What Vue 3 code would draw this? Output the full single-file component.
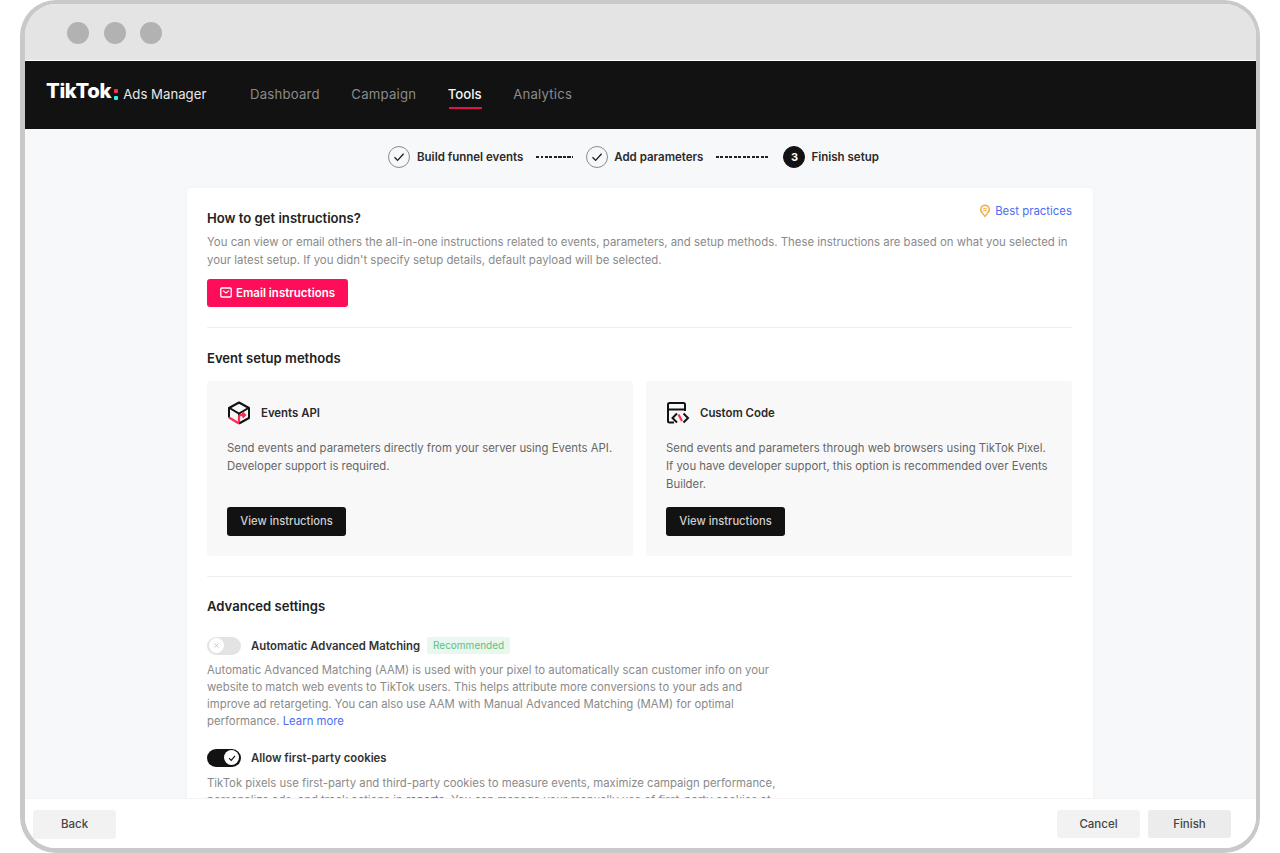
<template>
  <div class="frame">
    <div class="chrome">
      <span class="dot"></span>
      <span class="dot"></span>
      <span class="dot"></span>
    </div>

    <header class="nav">
      <div class="logo">
        <span class="logo-word">TikTok</span>
        <span class="logo-dots"><i class="red"></i><i class="cyan"></i></span>
        <span class="logo-sub">Ads Manager</span>
      </div>
      <nav class="links">
        <a v-for="link in links" :key="link" :class="{ active: link === 'Tools' }">{{ link }}</a>
      </nav>
    </header>

    <main class="body">
      <div class="stepper">
        <span class="step-circle">
          <svg width="12" height="12" viewBox="0 0 12 12"><path d="M1.5 6.3 4.6 9.4 10.6 2.8" fill="none" stroke="#1a1a1a" stroke-width="1.3" /></svg>
        </span>
        <span class="step-label first">Build funnel events</span>
        <span class="dashes short"></span>
        <span class="step-circle">
          <svg width="12" height="12" viewBox="0 0 12 12"><path d="M1.5 6.3 4.6 9.4 10.6 2.8" fill="none" stroke="#1a1a1a" stroke-width="1.3" /></svg>
        </span>
        <span class="step-label">Add parameters</span>
        <span class="dashes long"></span>
        <span class="step-circle current">3</span>
        <span class="step-label">Finish setup</span>
      </div>

      <section class="card">
        <div class="title-row">
          <h2>How to get instructions?</h2>
          <a class="practices">
            <svg width="12" height="14" viewBox="0 0 12 14">
              <path d="M6 1.2a4.3 4.3 0 0 1 2.6 7.7L6 12.6 3.4 8.9A4.3 4.3 0 0 1 6 1.2Z" fill="none" stroke="#f2ae4b" stroke-width="1.4" />
              <path d="M4.2 4.6h3.6M4.2 6.6h3.6" stroke="#f2ae4b" stroke-width="1" />
            </svg>
            Best practices
          </a>
        </div>
        <p class="desc intro">
          You can view or email others the all-in-one instructions related to events, parameters, and setup methods. These instructions are based on what you selected in your latest setup. If you didn't specify setup details, default payload will be selected.
        </p>
        <button class="btn-email">
          <svg width="12" height="11" viewBox="0 0 12 11">
            <rect x="0.8" y="1" width="10.4" height="9" rx="1" fill="none" stroke="#fff" stroke-width="1.3" />
            <path d="M3 3.6 6 6l3-2.4" fill="none" stroke="#fff" stroke-width="1.2" />
          </svg>
          Email instructions
        </button>

        <hr />

        <h2>Event setup methods</h2>
        <div class="methods">
          <div class="method">
            <div class="method-head">
              <svg width="24" height="24" viewBox="0 0 24 24" fill="none">
                <path d="M2 16.500V7L12 1.500 22 7v10L12 22.500" stroke="#121212" stroke-width="2" stroke-linejoin="round" />
                <path d="M2.500 7 12 12.500 21.500 7M12 12.500V15" stroke="#121212" stroke-width="2" />
                <path d="M2 16.500 12 22.500M12 21v-5.500q0-1.500 2-1.500h4M15.500 11.500l2.500 2.500-2.500 2.500" stroke="#fe2c55" stroke-width="2.200" />
              </svg>
              <h3>Events API</h3>
            </div>
            <p class="desc dark">Send events and parameters directly from your server using Events API. Developer support is required.</p>
            <button class="btn-dark">View instructions</button>
          </div>
          <div class="method">
            <div class="method-head">
              <svg width="24" height="24" viewBox="0 0 24 24" fill="none">
                <path d="M8 21.500H3.500A1.500 1.500 0 0 1 2 20V3.500A1.500 1.500 0 0 1 3.500 2h14A1.500 1.500 0 0 1 19 3.500V10" stroke="#121212" stroke-width="2" />
                <path d="M2 8.500h17" stroke="#121212" stroke-width="2" />
                <path d="M11 12.500 6.500 17l4.500 4.500M17.500 12.500 22 17l-4.500 4.500" stroke="#121212" stroke-width="2" />
                <path d="M12.500 13.500 16 20" stroke="#fe2c55" stroke-width="2.200" />
              </svg>
              <h3>Custom Code</h3>
            </div>
            <p class="desc dark">Send events and parameters through web browsers using TikTok Pixel. If you have developer support, this option is recommended over Events Builder.</p>
            <button class="btn-dark">View instructions</button>
          </div>
        </div>

        <hr class="second" />

        <h2>Advanced settings</h2>

        <div class="setting first-setting">
          <span class="toggle off"><span class="knob">
            <svg width="7" height="7" viewBox="0 0 7 7"><path d="M1.500 1.500l4 4m0-4-4 4" stroke="#c2c2c2" stroke-width="0.900" /></svg>
          </span></span>
          <span class="setting-name">Automatic Advanced Matching</span>
          <span class="badge">Recommended</span>
        </div>
        <p class="desc setting-desc">
          Automatic Advanced Matching (AAM) is used with your pixel to automatically scan customer info on your website to match web events to TikTok users. This helps attribute more conversions to your ads and improve ad retargeting. You can also use AAM with Manual Advanced Matching (MAM) for optimal performance. <a class="link">Learn more</a>
        </p>

        <div class="setting second-setting">
          <span class="toggle on"><span class="knob">
            <svg width="10" height="10" viewBox="0 0 10 10"><path d="M2 5.200 4.200 7.400 8 2.800" fill="none" stroke="#121212" stroke-width="1.200" /></svg>
          </span></span>
          <span class="setting-name">Allow first-party cookies</span>
        </div>
        <p class="desc setting-desc cookies">
          TikTok pixels use first-party and third-party cookies to measure events, maximize campaign performance, personalize ads, and track actions in <a class="link">reports</a>. You can manage your manually use of first-party cookies at any time in your settings.
        </p>
      </section>
    </main>

    <footer class="footer">
      <button class="btn-grey back">Back</button>
      <div class="footer-right">
        <button class="btn-grey">Cancel</button>
        <button class="btn-grey finish">Finish</button>
      </div>
    </footer>
  </div>
</template>

<script setup>
const links = ["Dashboard", "Campaign", "Tools", "Analytics"];
</script>

<style>
html, body {
  margin: 0;
  background: #fff;
}
</style>

<style scoped>
* {
  box-sizing: border-box;
}

.frame {
  width: 1240px;
  height: 853px;
  margin-left: 20px;
  border: 4px solid #c9c9c9;
  border-left-width: 5px;
  border-bottom-width: 5px;
  border-radius: 36px;
  overflow: hidden;
  display: flex;
  flex-direction: column;
  font-family: Inter, "Liberation Sans", sans-serif;
  background: #fff;
}

/* browser chrome */
.chrome {
  height: 56px;
  flex: none;
  background: #e4e4e4;
  display: flex;
  align-items: center;
  gap: 14.500px;
  padding: 1px 0 0 42px;
}

.dot {
  width: 22px;
  height: 22px;
  border-radius: 50%;
  background: #b2b2b2;
}

/* top nav */
.nav {
  height: 68px;
  flex: none;
  margin-top: 0.500px;
  background: #121212;
  display: flex;
  align-items: center;
  padding-left: 21px;
}

.logo {
  display: flex;
  align-items: center;
  color: #fff;
  width: 204px;
  height: 100%;
  padding-bottom: 2px;
}

.logo-word {
  font-size: 20.300px;
  font-weight: 800;
  letter-spacing: -0.300px;
  line-height: 1;
  margin-top: -4px;
}

.logo-dots {
  display: flex;
  flex-direction: column;
  gap: 3px;
  margin: 2px 5px 0 3px;
}

.logo-dots i {
  display: block;
  width: 4px;
  height: 4px;
  border-radius: 1px;
}

.red { background: #fe2c55; }
.cyan { background: #25f4ee; }

.logo-sub {
  font-size: 13.200px;
  color: #e8e8e8;
}

.links {
  display: flex;
  height: 100%;
  gap: 31.500px;
}

.links a {
  position: relative;
  display: flex;
  align-items: center;
  padding-bottom: 2px;
  font-size: 13.200px;
  letter-spacing: 0.200px;
  color: #8a8a8a;
}

.links a.active {
  color: #f5f5f5;
  font-weight: 500;
  letter-spacing: 0;
}

.links a.active::after {
  content: "";
  position: absolute;
  left: 1px;
  right: 0;
  top: 46px;
  height: 2px;
  background: #e5114f;
}

/* body */
.body {
  flex: 1;
  min-height: 0;
  overflow: hidden;
  background: #f7f8fa;
  display: flex;
  flex-direction: column;
}

.stepper {
  height: 59px;
  flex: none;
  display: flex;
  align-items: center;
  padding: 0 0 2px 363px;
}

.step-circle {
  width: 22px;
  height: 22px;
  border-radius: 50%;
  border: 1px solid #8c8c8c;
  display: flex;
  align-items: center;
  justify-content: center;
  font-size: 11px;
  font-weight: 700;
  color: #fff;
}

.step-circle.current {
  background: #121212;
  border-color: #121212;
}

.step-label {
  margin-left: 6px;
  font-size: 11.500px;
  font-weight: 600;
  color: #2b2b2b;
  white-space: nowrap;
}

.step-label.first {
  margin-left: 7px;
}

.dashes {
  height: 2px;
  background: repeating-linear-gradient(90deg, #222 0 3px, transparent 3px 4.500px);
}

.dashes.short {
  width: 37px;
  margin: 0 13px;
}

.dashes.long {
  width: 54px;
  margin: 0 13px;
}

.card {
  width: 906px;
  margin-left: 162px;
  flex: none;
  padding: 20px 21px 40px 20px;
  background: #fff;
  border-radius: 4px;
  box-shadow: 0 1px 6px rgba(0, 0, 0, 0.03);
}

h2 {
  margin: 0;
  font-size: 13.100px;
  line-height: 20px;
  font-weight: 600;
  color: #222;
}

.title-row {
  display: flex;
  justify-content: space-between;
  align-items: flex-start;
}

.practices {
  display: flex;
  align-items: center;
  gap: 4px;
  margin-top: -5px;
  font-size: 11.400px;
  line-height: 16px;
  color: #4d6cf5;
}

.desc {
  margin: 0;
  font-size: 11.350px;
  line-height: 18px;
  color: #8a8a8a;
}

.intro {
  margin-top: 5px;
  font-size: 11.400px;
}

.btn-email {
  display: flex;
  align-items: center;
  justify-content: center;
  gap: 4px;
  width: 141px;
  height: 28px;
  margin-top: 10px;
  border: none;
  border-radius: 3px;
  background: #fe0e58;
  color: #fff;
  font: 600 11.500px Inter, sans-serif;
}

hr {
  height: 1px;
  border: none;
  background: #efefef;
  margin: 20px 0 20px;
}

hr.second {
  margin: 20px 0 19px;
}

.methods {
  display: flex;
  gap: 13px;
  margin-top: 13px;
}

.method {
  flex: 1;
  height: 175px;
  padding: 20px;
  border-radius: 3px;
  background: #f8f8f8;
  display: flex;
  flex-direction: column;
}

.method-head {
  display: flex;
  align-items: center;
  gap: 10px;
  height: 24px;
}

.method-head svg {
  flex: none;
}

.method-head h3 {
  margin: 0;
  font-size: 11.400px;
  font-weight: 600;
  color: #2a2a2a;
}

.desc.dark {
  margin-top: 14px;
  color: #666;
}

.btn-dark {
  margin-top: auto;
  width: 119px;
  height: 29px;
  border: none;
  border-radius: 3px;
  background: #121212;
  color: #cfcfcf;
  font: 500 11.200px Inter, sans-serif;
}

.setting {
  display: flex;
  align-items: center;
}

.first-setting {
  margin-top: 21px;
}

.second-setting {
  margin-top: 19px;
}

.toggle {
  width: 34px;
  height: 18px;
  border-radius: 9px;
  display: flex;
  align-items: center;
  padding: 2px;
  flex: none;
}

.toggle.off {
  background: #e3e3e3;
}

.toggle.on {
  background: #121212;
  justify-content: flex-end;
}

.knob {
  width: 15px;
  height: 15px;
  border-radius: 50%;
  background: #fff;
  display: flex;
  align-items: center;
  justify-content: center;
}

.setting-name {
  margin-left: 10px;
  font-size: 11.350px;
  font-weight: 600;
  color: #333;
}

.badge {
  margin-left: 7px;
  height: 17px;
  width: 83px;
  border-radius: 2px;
  background: #e9f7ee;
  color: #5cc083;
  font-size: 10px;
  line-height: 17px;
  text-align: center;
}

.setting-desc {
  width: 572px;
  margin-top: 7px;
  line-height: 17px;
}

.setting-desc.cookies {
  margin-top: 8px;
}

.link {
  color: #4d6cf5;
}

/* footer */
.footer {
  height: 50.500px;
  flex: none;
  background: #fff;
  border-top: 1px solid #f3f3f3;
  display: flex;
  justify-content: space-between;
  align-items: flex-start;
  padding: 11px 25px 0 8px;
}

.footer-right {
  display: flex;
  gap: 8px;
}

.btn-grey {
  width: 83px;
  height: 28px;
  border: none;
  border-radius: 3px;
  background: #f2f2f2;
  color: #444;
  font: 500 11.500px Inter, sans-serif;
}

.btn-grey.back {
  height: 29px;
}

.btn-grey.finish {
  background: #ececec;
}
</style>
